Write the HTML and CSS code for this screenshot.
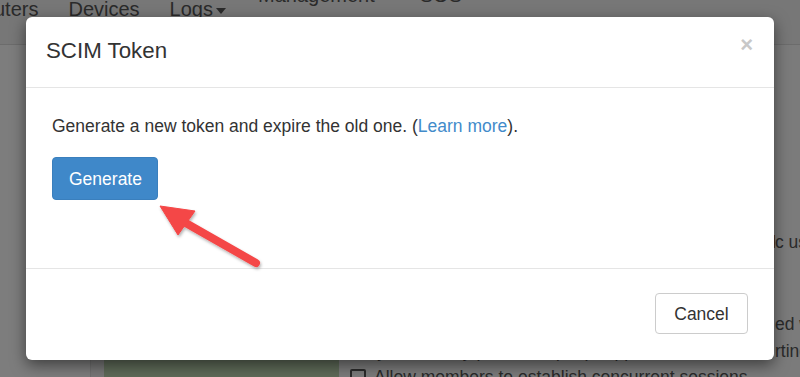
FILE: index.html
```html
<!DOCTYPE html>
<html>
<head>
<meta charset="utf-8">
<link rel="stylesheet" href="styles.css">
</head>
<body>
<div class="page">
  <nav class="navbar">
    <span class="nav-link first">uters</span>
    <span class="nav-link">Devices</span>
    <span class="nav-link">Logs<span class="caret"></span></span>
    <span class="nav-link raised">Management<span class="caret"></span></span>
    <span class="nav-link raised">SOS</span>
  </nav>
  <div class="content">
    <aside class="side"></aside>
    <div class="rail"></div>
    <div class="panel"></div>
    <main class="main">
      <p class="line l1"><span class="under">Provision members automatically with SCIM so that publi</span>c users</p>
      <p class="line l2"><span class="under">Members are signed out when they are remov</span>ed with</p>
      <p class="line l3"><span class="under">Only for identity providers (IdP) suppo</span>rting</p>
      <p class="line l4"><span class="check"></span>Allow members to establish concurrent sessions</p>
    </main>
  </div>
</div>

<div class="modal">
  <div class="modal-header">
    <h4 class="modal-title">SCIM Token</h4>
    <span class="close">×</span>
  </div>
  <div class="modal-body">
    <p class="desc">Generate a new token and expire the old one. (<a class="link" href="#">Learn more</a>).</p>
    <button class="btn btn-primary">Generate</button>
  </div>
  <div class="modal-footer">
    <button class="btn btn-default">Cancel</button>
  </div>
</div>

<svg class="arrow" width="130" height="90" viewBox="150 195 130 90">
  <defs>
    <filter id="sh" x="-20%" y="-20%" width="140%" height="140%">
      <feDropShadow dx="1" dy="2" stdDeviation="1.5" flood-color="#000" flood-opacity="0.3"/>
    </filter>
  </defs>
  <g filter="url(#sh)" fill="#f44646" stroke="#f44646">
    <line x1="184" y1="222" x2="256" y2="263" stroke-width="8" stroke-linecap="round"/>
    <polygon points="160,206 195,211 178,235" stroke-width="1" stroke-linejoin="round"/>
  </g>
</svg>
</body>
</html>
```

FILE: styles.css
```css
* { box-sizing: border-box; }
html, body { margin: 0; padding: 0; }
body {
  width: 800px;
  height: 377px;
  overflow: hidden;
  background: #7b7b7b;
  font-family: "Liberation Sans", Arial, sans-serif;
  color: #333;
}
.page { width: 800px; height: 377px; overflow: hidden; }
.navbar {
  height: 45px;
  background: #777;
  border-bottom: 1px solid #6c6c6c;
  display: flex;
  align-items: flex-start;
  gap: 30px;
  font-size: 20px;
  color: #2a2a2a;
  overflow: hidden;
}
.nav-link { line-height: 22px; margin-top: -2px; white-space: nowrap; flex-shrink: 0; }
.nav-link.first { margin-left: -6px; }
.nav-link.raised { margin-top: -16px; margin-left: 2px; }
.caret {
  display: inline-block;
  width: 0; height: 0;
  margin-left: 3px;
  vertical-align: middle;
  border-top: 6px solid #2a2a2a;
  border-left: 5px solid transparent;
  border-right: 5px solid transparent;
}
.content { display: flex; height: 332px; }
.side { width: 91px; flex-shrink: 0; background: #7d7d7d; border-right: 1px solid #6f6f6f; }
.rail { width: 13px; flex-shrink: 0; background: #777; }
.panel { width: 235px; flex-shrink: 0; margin-top: 295px; background: #5e6a58; }
.main { flex: 1; min-width: 0; padding-left: 11px; font-size: 17.5px; color: #2a2a2a; }
.line { margin: 0; white-space: nowrap; line-height: 22px; }
.l1 { margin-top: 186px; }
.l2 { margin-top: 60px; }
.l3 { margin-top: 5px; }
.l4 { margin-top: 4px; display: flex; align-items: center; gap: 8px; }
.under { display: inline-block; width: 425px; overflow: hidden; vertical-align: bottom; }
.check {
  width: 16px; height: 16px;
  border: 2px solid #2a2a2a;
  border-radius: 2px;
  display: inline-block;
  flex-shrink: 0;
}

.modal {
  position: absolute;
  left: 26px;
  top: 17px;
  width: 748px;
  height: 343px;
  background: #fff;
  border-radius: 6px;
  box-shadow: 0 5px 15px rgba(0,0,0,0.5);
  display: flex;
  flex-direction: column;
}
.modal-header {
  height: 71px;
  padding: 0 21px 0 20px;
  border-bottom: 1px solid #e5e5e5;
  display: flex;
  align-items: center;
}
.modal-title {
  margin: 0;
  font-weight: normal;
  font-size: 22.3px;
  color: #333;
  line-height: 30px;
  flex: 1;
  margin-top: -2px;
}
.close {
  font-size: 22px;
  font-weight: bold;
  color: #c8c8c8;
  line-height: 1;
  margin-top: -14px;
}
.modal-body {
  height: 181px;
  padding: 26px 26px 0 26px;
  border-bottom: 1px solid #e5e5e5;
}
.desc {
  margin: 0 0 19px 0;
  font-size: 17.5px;
  line-height: 24px;
  color: #333;
}
.link { color: #428bca; text-decoration: none; }
.btn {
  font-family: "Liberation Sans", Arial, sans-serif;
  font-size: 17.5px;
  border-radius: 4px;
  line-height: 24px;
  padding: 8px 16px;
}
.btn-primary {
  width: 106px;
  height: 43px;
  background: #3f88c9;
  border: 1px solid #3a7fbd;
  color: #fff;
}
.modal-footer {
  flex: 1;
  display: flex;
  justify-content: flex-end;
  align-items: flex-start;
  padding: 24px 26px 0 0;
}
.btn-default {
  width: 93px;
  height: 41px;
  background: #fff;
  border: 1px solid #ccc;
  color: #333;
}
.arrow {
  position: absolute;
  left: 150px;
  top: 195px;
}
```
